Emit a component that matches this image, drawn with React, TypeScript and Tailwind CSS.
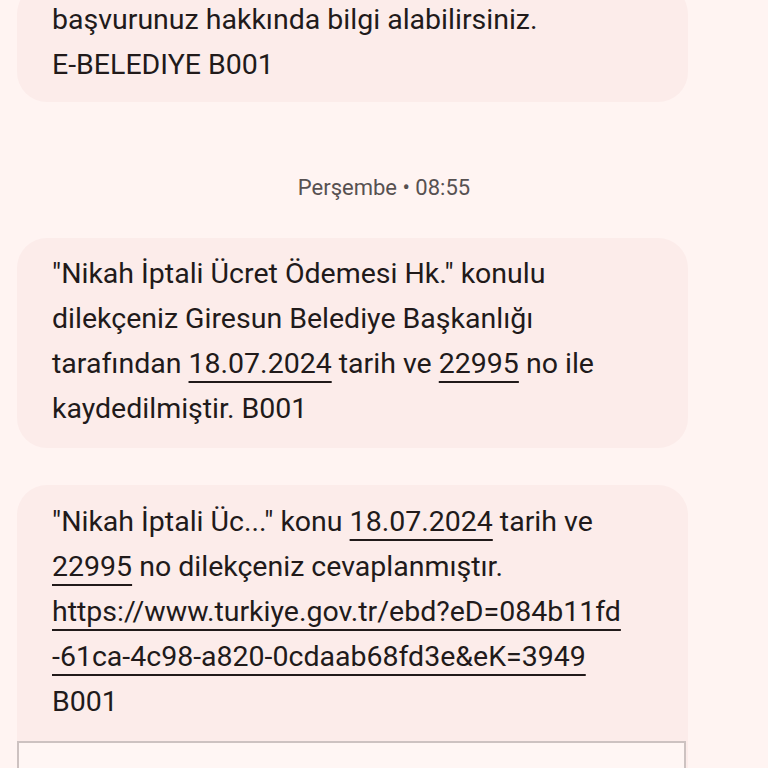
const lineText = "text-[#211a1a] text-[28.5px] leading-[45px]";
const link = "underline decoration-2 underline-offset-[8px]";

function Bubble({ children, className = "" }: { children: React.ReactNode; className?: string }) {
  return (
    <div className={`w-[671px] rounded-[30px] bg-[#fcecea] ${className}`}>
      {children}
    </div>
  );
}

export default function App() {
  return (
    <div className="h-[768px] w-[768px] overflow-hidden bg-[#fff4f2] pl-[17px] font-['Roboto','Noto_Sans',sans-serif]">
      <Bubble className="-mt-[16px] pb-[15px] pl-[35px] pt-[13px]">
        <p className={lineText}>
          başvurunuz hakkında bilgi alabilirsiniz.
          <br />
          E-BELEDIYE B001
        </p>
      </Bubble>

      <div className="mb-[37px] mt-[73px] w-[734px] text-center text-[22px] leading-[26px] text-[#575151]">
        Perşembe • 08:55
      </div>

      <Bubble className="pb-[17px] pl-[35px] pt-[13px]">
        <p className={lineText}>
          "Nikah İptali Ücret Ödemesi Hk." konulu
          <br />
          dilekçeniz Giresun Belediye Başkanlığı
          <br />
          tarafından <span className={link}>18.07.2024</span> tarih ve <span className={link}>22995</span> no ile
          <br />
          kaydedilmiştir. B001
        </p>
      </Bubble>

      <Bubble className="mt-[37px] overflow-hidden pt-[14px]">
        <p className={`${lineText} pl-[35px]`}>
          "Nikah İptali Üc..." konu <span className={link}>18.07.2024</span> tarih ve
          <br />
          <span className={link}>22995</span> no dilekçeniz cevaplanmıştır.
          <br />
          <span className={link}>https://www.turkiye.gov.tr/ebd?eD=084b11fd</span>
          <br />
          <span className={link}>-61ca-4c98-a820-0cdaab68fd3e&amp;eK=3949</span>
          <br />
          B001
        </p>
        <div className="mt-[17px] h-[120px] w-[669px] border-2 border-[#cdc2c1] bg-[#fff6f4]" />
      </Bubble>
    </div>
  );
}
